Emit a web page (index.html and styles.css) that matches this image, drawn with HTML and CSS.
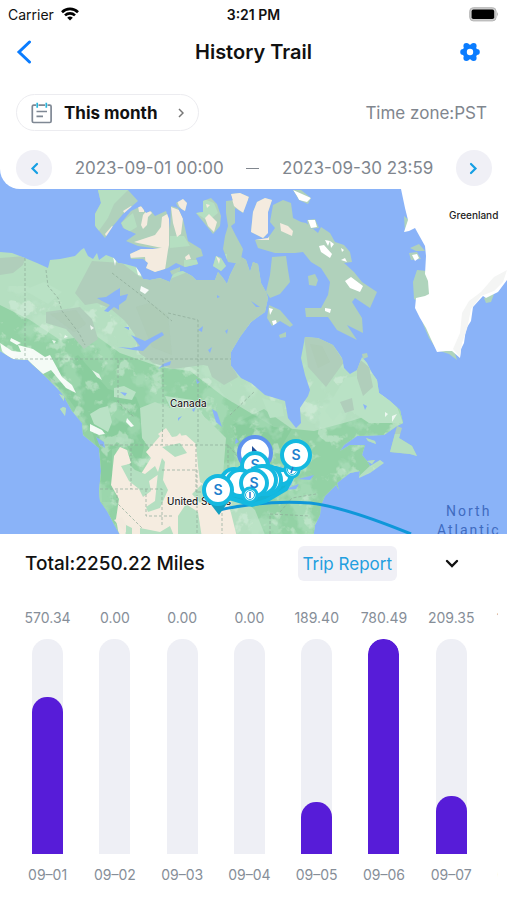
FILE: index.html
```
<!DOCTYPE html>
<html lang="en">
  <head>
    <meta charset="UTF-8">
    <meta name="viewport" content="width=device-width, initial-scale=1" />
    <title>History Trail</title>
    <link rel="stylesheet" href="styles.css">
  </head>
  <body>
    <header class="top">
      <div class="status">
        <div class="carrier">
          <span>Carrier</span>
          <svg width="18" height="14" viewBox="0 0 18 14" fill="none" stroke="#000" stroke-width="2.6">
            <path d="M1 5.2a11.4 11.4 0 0 1 16 0"/>
            <path d="M4 8.4a7.2 7.2 0 0 1 10 0"/>
            <path d="M9 13.6L6.2 10.8a4 4 0 0 1 5.6 0z" fill="#000" stroke="none"/>
          </svg>
        </div>
        <time class="clock">3:21 PM</time>
        <svg class="battery" width="30" height="15" viewBox="0 0 30 15">
          <rect x=".7" y=".7" width="26.4" height="13.2" rx="3.6" fill="#ccc" stroke="#b5b5b5"/>
          <rect x="2.6" y="2.6" width="22.6" height="9.4" rx="1.8"/>
          <path d="M28.2 5q1.8 2.4 0 4.8z" fill="#999"/>
        </svg>
      </div>

      <nav class="nav">
        <a class="back" href="#" aria-label="Back">
          <svg width="16" height="24" viewBox="0 0 16 24"><path d="M13.500 2L3 12l10.500 10" fill="none" stroke="#0a7cff" stroke-width="3" stroke-linecap="round"/></svg>
        </a>
        <h1 class="title">History Trail</h1>
        <button class="gear" type="button" aria-label="Settings">
          <svg width="20" height="20" viewBox="0 0 20 20">
            <g fill="#0a7cff">
              <circle cx="10" cy="10" r="7.600"/>
              <circle cx="3.200" cy="10" r="3"/><circle cx="16.800" cy="10" r="3"/>
              <circle cx="6.400" cy="4" r="3"/><circle cx="13.600" cy="4" r="3"/>
              <circle cx="6.400" cy="16" r="3"/><circle cx="13.600" cy="16" r="3"/>
            </g>
            <circle cx="10" cy="10" r="3.200" fill="#fff"/>
          </svg>
        </button>
      </nav>

      <div class="period">
        <button class="chip" type="button">
          <svg width="22" height="22" viewBox="0 0 22 22" fill="none" stroke="#7f8894" stroke-width="1.700">
            <path d="M5 3.200H2.600Q1.300 3.200 1.300 4.500V19.200Q1.300 20.500 2.600 20.500H18.800Q20.100 20.500 20.100 19.200V4.500Q20.100 3.200 18.800 3.200H16.500M7.500 3.200H14"/>
            <path d="M5.500 9.500H16M5.500 14.300H12"/>
            <path d="M6.200 .8V5.800M15.300 .8V5.800" stroke="#27b5dc"/>
          </svg>
          <span>This month</span>
          <svg class="more" width="6" height="10" viewBox="0 0 6 10"><path d="M1 1l4 4-4 4" fill="none" stroke="#777" stroke-width="1.500"/></svg>
        </button>
        <span class="zone">Time zone:PST</span>
      </div>

      <div class="range">
        <button class="step" type="button" aria-label="Previous month">
          <svg width="9" height="13" viewBox="0 0 9 13"><path d="M7 2L2.500 6.500 7 11" fill="none" stroke="#159fe4" stroke-width="2.200" stroke-linecap="round"/></svg>
        </button>
        <time>2023-09-01 00:00</time>
        <span class="dash"></span>
        <time>2023-09-30 23:59</time>
        <button class="step" type="button" aria-label="Next month">
          <svg width="9" height="13" viewBox="0 0 9 13"><path d="M2 2l4.500 4.500L2 11" fill="none" stroke="#159fe4" stroke-width="2.200" stroke-linecap="round"/></svg>
        </button>
      </div>
    </header>

    <!-- map -->
    <svg class="map" viewBox="0 169 507 365" preserveAspectRatio="xMidYMid slice">
      <defs>
        <path id="land" d="M0 252L12 253 25 258 37 263 48 268 50 260 60 259 75 256 81 250 84 248 88 256 93 259 97 253 99 260 106 255 114 258 118 263 125 264 136 267 140 273 143 279 150 280 160 278 170 282 172 276 175 272 183 271 192 276 196 280 215 280 218 272 223 278 227 284 230 275 235 265 240 257 243 258 246 260 250 272 253 262 258 264 261 283 266 292 268 298 265 312 251 322 240 337 231 352 231 366 241 378 251 383 265 395 285 401 288 418 296 428 301 423 300 408 308 396 310 390 305 375 301 358 305 337 318 338 333 345 338 352 342 358 344 368 350 374 357 370 362 357 367 363 372 373 377 380 379 393 390 401 400 410 403 423 397 426 384 435 357 436 344 445 340 451 350 445 365 445 362 455 367 461 370 466 380 460 384 463 370 473 359 478 360 471 350 473 337 483 339 490 336 485 325 496 321 505 320 515 315 525 313 540 123 540 115 526 107 511 100 501 99 491 101 471 99 448 83 435 82 423 72 411 63 395 57 388 47 378 33 365 28 360 13 359 0 351z"/>
        <path id="isles" d="M98 190L128 190 138 201 123 214 113 226 105 238 95 226 95 214 101 203zM121 223L131 211 141 206 146 213 151 211 155 216 166 211 169 219 170 229 171 206 178 208 183 219 188 241 201 249 203 256 196 258 198 264 185 267 176 263 168 268 155 272 146 268 148 263 143 259 131 259 130 254 141 249 160 249 138 246 126 241 136 234 123 228zM176 203L183 199 187 203 185 211 178 207zM196 213L203 212 203 201 211 198 217 204 221 216 220 226 213 234 205 224zM226 201L235 200 235 223 231 226 236 236 243 249 240 264 228 262 223 249 225 236 228 226 226 213zM231 194L240 193 249 197 243 213 235 208zM265 198L272 200 268 212 268 233 263 238 251 232 253 212 257 202zM273 205L283 200 291 203 293 218 301 222 306 223 318 233 321 227 330 233 335 242 344 245 350 252 352 262 344 263 354 272 362 282 377 292 370 308 355 298 352 302 362 318 363 333 347 325 357 340 337 330 328 317 306 317 305 308 321 308 328 295 330 282 321 268 311 262 303 252 295 253 275 253 258 248 255 240 268 238 275 228 270 222zM272 257L286 256 288 270 290 282 280 294 270 298 266 292 270 275zM269 305L280 310 293 325 290 327 280 321 272 326 267 318zM216 256L221 258 226 266 221 271 213 266zM170 271L180 267 180 271 172 275zM293 190L301 190 311 198 308 204 299 200zM307 220L315 219 319 228 309 229zM308 276L315 274 318 280 316 286 309 285zM279 335L286 332 286 337 280 338zM362 354L367 353 368 357 363 359zM397 426L402 428 399 438 412 446 417 456 410 454 390 452zM366 438L375 441 376 444 368 441zM367 461L375 460 372 464zM410 248L419 244 425 251 416 251zM409 253L417 252 421 259 411 260zM63 407L66 408 65 416 60 409zM59 394L64 396 64 401zM50 378L56 382 52 383z"/>
        <path id="pin" d="M-9 12L1 25 10 12z"/>
        <clipPath id="onLand"><use href="#land"/></clipPath>
        <clipPath id="onIsles"><use href="#isles"/></clipPath>
        <!-- vegetation patches -->
        <filter id="woods" x="0" y="0" width="1" height="1">
          <feTurbulence type="fractalNoise" baseFrequency=".035" numOctaves="4" seed="8"/>
          <feColorMatrix values="0 0 0 0 .56  0 0 0 0 .82  0 0 0 0 .64  9 0 0 0 -4.700"/>
        </filter>
        <filter id="meadow" x="0" y="0" width="1" height="1">
          <feTurbulence type="fractalNoise" baseFrequency=".06" numOctaves="4" seed="21"/>
          <feColorMatrix values="0 0 0 0 .76  0 0 0 0 .90  0 0 0 0 .78  9 0 0 0 -5.200"/>
        </filter>
      </defs>

      <rect y="169" width="507" height="365" fill="#8ab3f8"/>
      <use href="#land" fill="#b5dfc1"/>

      <g clip-path="url(#onLand)">
        <!-- forest belt -->
        <path fill="#93d2a5" d="M0 305l30 15 30 20 35-5 25 18 40 14 30 4 34 26 50 30 40 4 37-10 50-16 30-3-40 44-36 34-30 55h-60l-10-25-55-48-20-8-25-12v45l-30 65h-16L0 360z"/>
        <path fill="#82ca98" opacity=".6" d="M48 375l30-20 30 34 28 8 12 30-8 38-14-20-28 8-6-22-22-30zM100 450l12-8v60l-10 0zM232 425l32-16 28 20-12 20-40 4z"/>
        <rect y="286" width="235" height="248" filter="url(#woods)" opacity=".3"/>
        <rect x="230" y="360" width="190" height="174" filter="url(#woods)" opacity=".35"/>
        <rect y="300" width="420" height="234" filter="url(#meadow)" opacity=".4"/>
        <path fill="#b9e2c5" d="M100 408l8-2 4 16-4 10-14-8-4-10zM114 388l10-2 12 6-4 8-18-3zM165 396l28 4 12 18-10 4-22-8zM345 378l30-5 20 28 8 22-34 0-24-16-12 14-8-10zM262 398l20 6 2 12-14 2zM24 290l20-8 18 10-14 12z"/>
        <!-- tundra -->
        <path fill="#b0cebb" d="M92 261l30 2 18 14 30 2 20-8 20 7 30-32 45 30-12 45-38 50-32-6-30 4-20-6-14-10-4-18-10-14-14-12-14-6-12 2-10-12zM0 258l26-2-3 9-10 8-13 2zM46 312l34-5 12 12 6 20-14 10-18-20-20-6zM304 336l26 4 14 22-18 25-18-20zM357 357l12 10 4 20-10 9-6-18zM340 402l12-4 2 12-9 3zM206 361l22-4 10 20-14 8-12-8z"/>
        <path fill="#abc9b4" opacity=".5" d="M136 307l14-4 18 12 4 40-20-8zM50 314l26-4 10 14-12 8zM310 344l12 2 8 16-12 6z"/>
        <!-- prairie -->
        <path fill="#b9e0c3" d="M140 408l15-6 15 6 18-4 20 16 18 18-4 50-36 10-44-60z"/>
        <path fill="#f5ece0" d="M114 456l6-9 7 3 4 13-8 4 9 12 12 9-3-14 10-16-5-6 8-9 12-14 6 8 14-2 10 9 2 22 2 16 10 6 10-2 5 7 6 20 7 28H120l-4-22 3-20-8-14z"/>
        <path fill="#b4dfc1" d="M121 466l8-2 6 6 10 4 10-8 4 8-10 7 2 10-8 6-4-8-10-8zM162 447l18-4 7 10-12 4zM158 472l4-14 3 4-2 18 5 10-8 18-12 4-2-5 9-6zM178 516l8-12 12 8 4 26h-24zM192 494l10-10 6 12-8 7zM124 524l8 4 0 8-6 0zM140 528l20 4 10-6 4 10h-34z"/>
        <path fill="#f3eade" d="M114 520l8-3 4 8 0 8zM183 402l4 4-3 3zM172 441l8-8 4 8zM158 434l8-6 4 6-6 6z"/>
        <path fill="#fff" opacity=".9" d="M0 343l12 8 9 1-3-7 15 4 12 8 5-2 12 22 10 8 4 8-10-5-15-18-8 4-16-14-15 1-10-10zM11 338l10 5-4 2-7-4zM90 424l12 6 3 4-6 1-9-4zM127 418l7 8-3 1-5-5zM141 286l8 4-4 4-5-3zM113 257l3 4-1 5zM136 267l4 3 2 6-4-1z"/>
        <path fill="#fff" opacity=".75" d="M92 370l7 4 3 6-5-3zM52 340l4 1-2 3zM65 335l3 2-4 1zM90 325l4 3-3 2zM385 412l3 2-3 3zM392 416l5-2-5 8z"/>
        <!-- lakes -->
        <g fill="#8ab3f8">
          <path d="M97 298l9-1 9-6 5-3 0 8 8-2-2 6-7 5 0 5-5-3-6 5-4-1 6-6-8-4zM118 347l13 1 9-2-9-11 14 6 17-9 2 3-13 8-8 8-10-1zM124 327l5 0 0 3zM212 409l5 3 5 15-6-5zM158 369l5-5 8-3-1 4-8 2zM120 392l7 1-2 3zM196 379l4 3-3 2zM217 295l3 2-3 1zM198 330l5-4-1 6zM208 350l4-3-2 6zM251 301l9 6-4 0zM363 404l4 2-2 4zM96 437l8 5 1 6-6-4zM236 438l3 4-4 2zM178 418l4-2-4 5zM192 410l4-4-2 6zM225 331l3-2-1 5z"/>
          <path d="M240 462l14-10 18 8-8 7zM258 474l3 22 9-1-2-23zM280 466l14 10-3 10-8-6zM283 490l16-6-3 5zM298 479l16-4-4 5z"/>
        </g>
        <!-- borders -->
        <g fill="none" stroke="#8eaa98" stroke-width=".7" stroke-dasharray="3 2">
          <path d="M25 258v100M46 270l2 16 10 12 4 13 17 22 6 12M112 273l30 23 30 25M168 313l30 7v39M0 359h231M118 360v42l16 15M163 359v60l-1 26M198 359v85M100 445h128l10 12M100 489h62v37M131 448v41M146 489v27l28 0M162 470h35v64M196 444v48h26v42M117 490v13l25 25M230 415l25-24M228 445v32l14 10M280 512l12-14 24-4M270 534v-20l40 2"/>
        </g>
      </g>

      <use href="#isles" fill="#b0d1bb"/>
      <g clip-path="url(#onIsles)">
        <path fill="#b5dfc1" d="M94 190h34l-14 14-6 14-10 14-6-14zM121 223l12-10 4 14-10 6zM170 236h14l6 10-20 2zM196 213l8-14 10 4 4 10-10 8zM184 260h20v10h-20zM212 254h15v18h-15zM62 390h-20v30h30zM366 434h60v30h-60z"/>
        <path fill="#f4ebdf" d="M112 226l3 2-3 6-6 2-1-2zM123 211l8-5 2 2-8 6zM138 206l6 1 0 5-5 0zM143 215l5-6 4 4-4 4-1 8-4 4-2-4zM134 242l21-7 6-8 1-10 7-4v32l-1 5-3 20-22 5 3-8-1-10-16 1-1-6 14-4h20l-24-5zM171 207l8 3 4 8-2 16-4 3-4-14zM176 198h12v14l-4 0-5-6zM205 218l4-4 8 8-3 10-6-6zM206 204l4 1-3 3zM230 192h20l-5 22-6-4-5-4zM250 196h24l-4 16-1 28h-20zM280 223l8 3 5 5-1 5-11-5zM185 257l4-3 2 5-5 1zM216 256l4 3-1 5z"/>
        <path fill="#fff" d="M293 190l18 8-4 4-8-2-2-4zM308 220l7 0 2 7-6 1zM319 246l5-1 8 9-2 4-9-6zM325 240l5 1-2 5zM330 241l4 3-3 4zM345 281l6-4 12 9-3 6-10-4zM325 308l6 1-1 4-5-2zM269 308l4 1-3 6zM272 321l4-1 1 4-3 4zM341 248l3 2-2 2zM341 260l4-2 2 4z"/>
      </g>

      <!-- Greenland -->
      <path fill="#afd4bc" d="M404 216l6 5 2 7-7 4zM417 270l10 1 4 26-4 10-13-8-1-17zM420 306l5 6 6 20 8 16 14-1 4 13-8-6-12-4-8-12-6-14zM484 298l10-4-3 8-5 1z"/>
      <path fill="#fff" d="M401 189H507V280L498 292 486 298 483 296 473 307 471 321 466 329 464 343 461 349 460 358 452 351 446 351 437 352 430 337 426 328 420 318 415 308 416 298 425 296 429 294 428 281 425 274 426 256 425 246 420 237 415 228 409 231 404 232 408 220 405 208z"/>
      <path fill="#f4f5f4" d="M507 270l-13 7-13 15-12 9-7 12-2 20-7 16 7 8 2-14 5-14 4-20 10-13 13-5 9-9z"/>
      <path fill="#fff" d="M412 255l5-1 2 4-4 3z"/>

      <path d="M219 510Q265 500 310 503Q345 507 411 534" fill="none" stroke="#0f97d9" stroke-width="3"/>

      <g class="country">
        <text x="449" y="219">Greenland</text>
        <text x="170" y="407">Canada</text>
        <text x="167" y="505">United States</text>
      </g>
      <g class="ocean">
        <text x="446" y="516">North</text>
        <text x="437" y="535">Atlantic</text>
      </g>

      <!-- stops -->
      <g stroke="#14b9e0" fill="#fff" stroke-width="4">
        <circle cx="255" cy="453" r="16" stroke="#5f93ee"/>
        <path d="M252 446l5 5-5 1z" fill="#23509b" stroke="none"/>
        <path d="M228 478l12-10 36 0 18 6-8 15-20 12-14 4-20-6z" fill="#14b3d4"/>
        <circle cx="255" cy="466" r="13"/>
      </g>
      <g class="stop"><text x="255" y="470">S</text></g>
      <g stroke="#14b9e0" fill="#fff" stroke-width="4">
        <circle cx="283" cy="477" r="7"/>
        <circle cx="292" cy="470" r="7" stroke-width="3"/>
        <circle cx="292" cy="470" r="4.500" stroke-width="1"/>
        <circle cx="234" cy="482" r="13"/>
        <circle cx="240" cy="483" r="13"/>
        <circle cx="267" cy="480" r="14"/>
        <circle cx="262" cy="480" r="14"/>
        <circle cx="254" cy="483" r="13"/>
        <circle cx="250" cy="495" r="7" stroke-width="3"/>
        <circle cx="250" cy="495" r="4.500" stroke-width="1"/>
        <use href="#pin" x="218" y="490" fill="#139fc0" stroke="none"/>
        <circle cx="218" cy="490" r="14"/>
        <circle cx="296" cy="455" r="14"/>
      </g>
      <path d="M250 492v6M293 467l-2 6" stroke="#2d79c7" stroke-width="1.500"/>
      <g class="stop">
        <text x="218" y="495">S</text>
        <text x="296" y="460">S</text>
        <text x="254" y="488">S</text>
      </g>
    </svg>

    <section class="report">
      <div class="summary">
        <h2 class="total">Total:2250.22 Miles</h2>
        <button class="trip" type="button">Trip Report</button>
        <button class="fold" type="button" aria-label="Collapse">
          <svg width="14" height="10" viewBox="0 0 14 10"><path d="M2 2l5 5 5-5" fill="none" stroke="#111" stroke-width="2.400" stroke-linecap="round"/></svg>
        </button>
      </div>

      <div class="chart">
        <div class="day"><span>570.34</span><div class="bar"><div class="fill" style="height: 73%"></div></div><span>09–01</span></div>
        <div class="day"><span>0.00</span><div class="bar"></div><span>09–02</span></div>
        <div class="day"><span>0.00</span><div class="bar"></div><span>09–03</span></div>
        <div class="day"><span>0.00</span><div class="bar"></div><span>09–04</span></div>
        <div class="day"><span>189.40</span><div class="bar"><div class="fill" style="height: 24%"></div></div><span>09–05</span></div>
        <div class="day"><span>780.49</span><div class="bar"><div class="fill" style="height: 100%"></div></div><span>09–06</span></div>
        <div class="day"><span>209.35</span><div class="bar"><div class="fill" style="height: 27%"></div></div><span>09–07</span></div>
        <div class="day"><span>126.08</span><div class="bar"></div><span>09–08</span></div>
      </div>
    </section>
  </body>
</html>
```
FILE: styles.css
```
* { box-sizing: border-box; }
body {
  margin: 0;
  font-family: Inter, "Liberation Sans", sans-serif;
  background: #fff;
  color: #111;
}
button {
  font: inherit;
  color: inherit;
  border: none;
  padding: 0;
  background: none;
  cursor: pointer;
}
svg { display: block; }

/* header */
.top {
  position: relative;
  z-index: 1;
  background: #fff;
  border-bottom-left-radius: 20px;
}
.status {
  display: grid;
  grid-template-columns: 1fr auto 1fr;
  align-items: center;
  height: 28px;
  padding: 0 8px;
  font-size: 14px;
}
.carrier {
  display: flex;
  align-items: center;
  gap: 7px;
}
.clock { font-weight: 600; }
.battery { justify-self: end; }
.nav {
  display: grid;
  grid-template-columns: 1fr auto 1fr;
  align-items: center;
  height: 48px;
  padding: 0 16px;
}
.title {
  margin: 0;
  font-size: 20px;
  font-weight: 600;
}
.gear {
  justify-self: end;
  margin-right: 11px;
}
.period {
  display: flex;
  justify-content: space-between;
  align-items: center;
  padding: 18px 20px 0 16px;
}
.chip {
  display: flex;
  align-items: center;
  gap: 11px;
  height: 37px;
  padding: 0 14px;
  border: 1px solid #ececf0;
  border-radius: 19px;
  font-size: 17px;
  font-weight: 700;
}
.more { margin-left: 10px; }
.zone {
  font-size: 17px;
  color: #80868e;
}
.range {
  display: flex;
  justify-content: space-between;
  align-items: center;
  padding: 19px 15px 3px 16px;
  font-size: 17px;
  color: #80868e;
}
.step {
  display: flex;
  justify-content: center;
  align-items: center;
  width: 36px;
  height: 36px;
  border-radius: 50%;
  background: #f0f0f6;
}
.dash {
  width: 13px;
  height: 1px;
  background: #80868e;
}

/* map */
.map {
  width: 100%;
  aspect-ratio: 507 / 365;
  margin-top: -20px;
}
.country {
  font-size: 10px;
  font-weight: 500;
  fill: #222;
  stroke: #fff;
  stroke-width: 1px;
  paint-order: stroke;
}
.ocean {
  font-family: Roboto, sans-serif;
  font-size: 14px;
  letter-spacing: 2px;
  fill: #3f6bc0;
}
.stop {
  font-size: 14px;
  font-weight: 600;
  fill: #2080ce;
  text-anchor: middle;
}

/* report */
.summary {
  display: flex;
  align-items: center;
  padding: 12px 48px 0 25px;
}
.total {
  flex: 1;
  margin: 0;
  font-size: 19px;
  font-weight: 500;
}
.trip {
  height: 35px;
  padding: 0 5px;
  margin-right: 48px;
  border-radius: 6px;
  background: #f0f0f6;
  color: #239fdf;
  font-size: 17px;
}
.chart {
  display: flex;
  overflow: hidden;
  margin: 28px 9px 0 14px;
  padding-bottom: 14px;
}
.day {
  display: flex;
  flex: 0 0 13.9%;
  flex-direction: column;
  align-items: center;
  gap: 12px;
  font-size: 14px;
  line-height: 18px;
  color: #868e98;
}
.bar {
  display: flex;
  align-items: flex-end;
  overflow: hidden;
  width: 31px;
  height: 215px;
  border-radius: 15px 15px 0 0;
  background: #eeeff5;
}
.fill {
  width: 100%;
  border-radius: 15px 15px 0 0;
  background: #571cd8;
}
```
